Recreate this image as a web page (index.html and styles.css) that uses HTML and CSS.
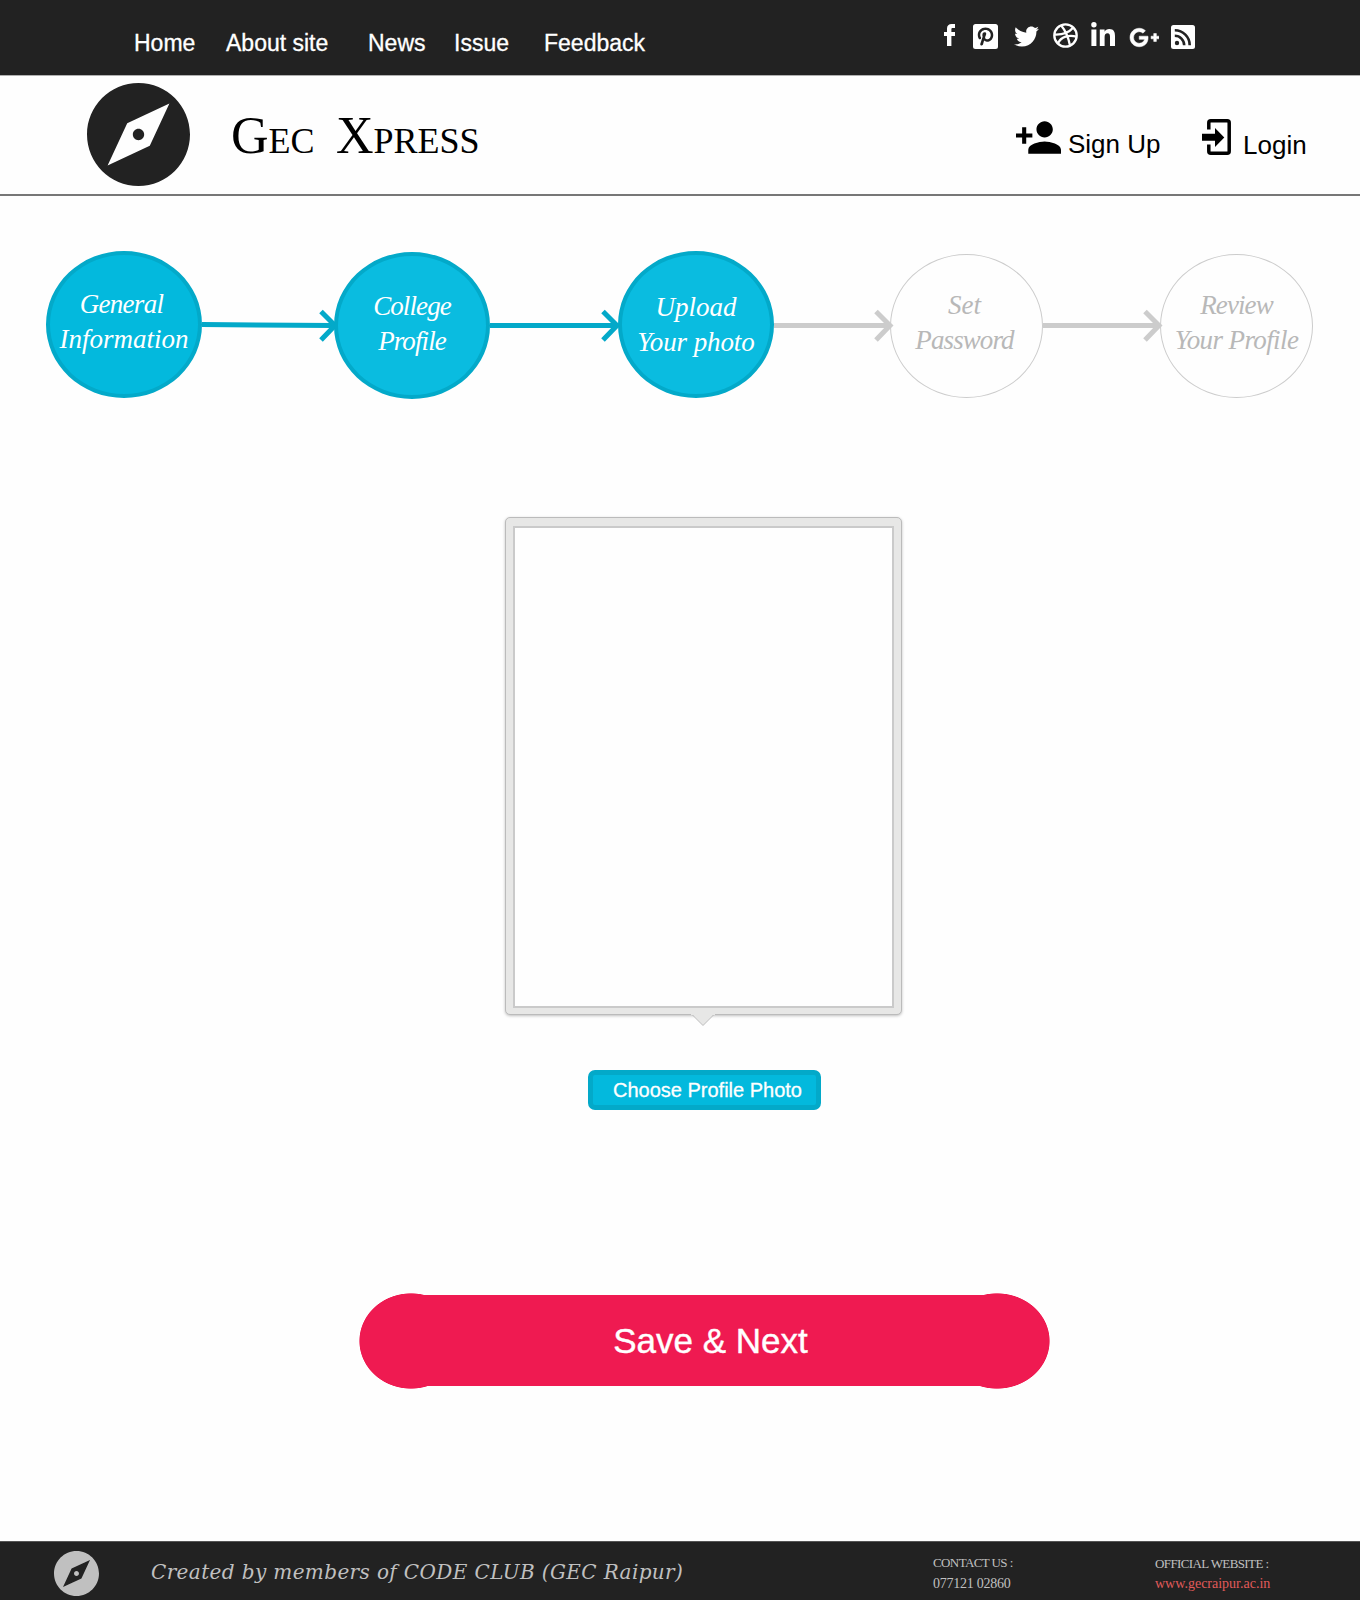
FILE: index.html
```html
<!DOCTYPE html>
<html lang="en">
<head>
<meta charset="utf-8">
<title>Gec Xpress</title>
<link rel="stylesheet" href="styles.css">
</head>
<body>
<div class="topbar">
  <nav class="nav"><a>Home</a><a>About site</a><a>News</a><a>Issue</a><a>Feedback</a></nav>
  <div class="social">
    <svg class="fb" viewBox="0 0 11 22"><path d="M11 0v4H8.7C7.8 4 7.4 4.400 7.400 5.300V8H11v4H7.400v10H3V12H0V8h3V4.600C3 1.600 4.800 0 7.600 0z"/></svg>
    <svg class="pin" viewBox="2 2 20 20"><path d="M13,16.2C12.2,16.2 11.43,15.86 10.88,15.28L9.93,18.5L9.86,18.69L9.83,18.67C9.64,19 9.29,19.2 8.9,19.2C8.29,19.2 7.8,18.71 7.8,18.1C7.8,18.05 7.81,18 7.81,17.95H7.8L7.85,17.77L9.7,12.21C9.7,12.21 9.5,11.59 9.5,10.73C9.5,9 10.42,8.5 11.16,8.5C11.91,8.5 12.58,8.76 12.58,9.81C12.58,11.15 11.69,11.84 11.69,12.81C11.69,13.55 12.29,14.16 13.03,14.16C15.37,14.16 16.2,12.4 16.2,10.75C16.2,8.57 14.32,6.8 12,6.8C9.68,6.8 7.8,8.57 7.8,10.75C7.8,11.42 8,12.09 8.34,12.68C8.43,12.84 8.5,13 8.5,13.2A1,1 0 0,1 7.5,14.2C7.13,14.2 6.79,14 6.62,13.7C6.08,12.81 5.8,11.79 5.8,10.75C5.8,7.47 8.58,4.8 12,4.8C15.42,4.8 18.2,7.47 18.2,10.75C18.2,13.37 16.57,16.2 13,16.2M20,2H4C2.89,2 2,2.89 2,4V20A2,2 0 0,0 4,22H20A2,2 0 0,0 22,20V4C22,2.89 21.1,2 20,2Z"/></svg>
    <svg class="tw" viewBox="1.5 4 21 17"><path d="M22.46,6C21.69,6.35 20.86,6.58 20,6.69C20.88,6.16 21.56,5.32 21.88,4.31C21.05,4.81 20.13,5.16 19.16,5.36C18.37,4.5 17.26,4 16,4C13.65,4 11.73,5.92 11.73,8.29C11.73,8.63 11.77,8.96 11.84,9.27C8.28,9.09 5.11,7.38 3,4.79C2.63,5.42 2.42,6.16 2.42,6.94C2.42,8.43 3.17,9.75 4.33,10.5C3.62,10.5 2.96,10.3 2.38,10C2.38,12.11 3.86,13.85 5.82,14.24C5.46,14.34 5.08,14.39 4.69,14.39C4.42,14.39 4.15,14.36 3.89,14.31C4.43,16 6,17.26 7.89,17.29C6.43,18.45 4.58,19.13 2.56,19.13C2.22,19.13 1.88,19.11 1.54,19.07C3.44,20.29 5.7,21 8.12,21C16,21 20.33,14.46 20.33,8.79C20.33,8.6 20.33,8.42 20.32,8.23C21.16,7.63 21.88,6.87 22.46,6Z"/></svg>
    <svg class="dr" viewBox="0 0 25 25"><g fill="none" stroke="#fff" stroke-width="2.3"><circle cx="12.500" cy="12.500" r="11.200"/><path d="M8 2.300Q14.500 10 17 22.500M1.500 11.500Q14 12 20.300 4.500M4.800 20.500C8 13.500 16 11.500 23.500 13.600"/></g></svg>
    <svg class="li" viewBox="0 0 24 24"><circle cx="2.900" cy="2.800" r="2.700"/><path d="M.4 7.500h5V24h-5zM8.800 7.500h4.800v2.200c.8-1.600 2.500-2.600 4.700-2.600 4.400 0 5.700 2.800 5.700 6.900v10h-5v-9c0-2.300-.5-3.800-2.500-3.800-2.100 0-2.900 1.500-2.900 3.800v9H8.800z"/></svg>
    <svg class="gp" viewBox="1 5 22 14"><path stroke="#fff" stroke-width=".4" d="M23,11H21V9H19V11H17V13H19V15H21V13H23M8,11V13.4H12C11.8,14.4 10.8,16.4 8,16.4C5.6,16.4 3.7,14.4 3.7,12C3.7,9.6 5.6,7.6 8,7.6C9.4,7.6 10.3,8.2 10.8,8.7L12.7,6.9C11.5,5.7 9.9,5 8,5C4.1,5 1,8.1 1,12C1,15.9 4.1,19 8,19C12,19 14.7,16.2 14.7,12.2C14.7,11.7 14.7,11.4 14.6,11H8Z"/></svg>
    <svg class="rss" viewBox="0 0 24 24"><rect width="24" height="24" rx="2.500"/><circle cx="6" cy="18" r="2.200" fill="#222"/><path d="M3.800 10.800A9.400 9.400 0 0 1 13.200 20.200M3.800 5.300A14.900 14.900 0 0 1 18.700 20.200" fill="none" stroke="#222" stroke-width="2.600"/></svg>
  </div>
</div>
<header class="header">
  <svg class="logo" viewBox="2 2 20 20"><path d="M12 10.900c-.61 0-1.100.49-1.100 1.100s.49 1.100 1.100 1.100 1.100-.49 1.100-1.100-.49-1.100-1.100-1.100zM12 2C6.480 2 2 6.480 2 12s4.480 10 10 10 10-4.480 10-10S17.520 2 12 2zm2.190 12.190L6 18l3.810-8.190L18 6z"/></svg>
  <h1 class="brand"><span class="w1">G<small>EC</small></span><span>X<small>PRESS</small></span></h1>
  <a class="signup"><svg viewBox="1 4 22 16"><path d="M15 12c2.210 0 4-1.790 4-4s-1.790-4-4-4-4 1.790-4 4 1.790 4 4 4zm-9-2V7H4v3H1v2h3v3h2v-3h3v-2H6zm9 4c-2.670 0-8 1.340-8 4v2h16v-2c0-2.660-5.330-4-8-4z"/></svg><span>Sign Up</span></a>
  <a class="login"><svg viewBox="0 0 29 36"><path d="M6.800 10.500V3.800q0-2 2-2h16.400q2 0 2 2v28.400q0 2-2 2H8.800q-2 0-2-2v-6.700" fill="none" stroke="#000" stroke-width="3.500"/><path d="M0 14.800h13V9l9.300 9.500L13 28v-6.200H0z"/></svg><span>Login</span></a>
</header>
<main>
  <div class="steps">
    <div class="step done first"><span class="general">General</span><span class="loose">Information</span></div>
    <svg class="link on" viewBox="0 0 132 36"><path d="M0 17.500L131 18.500" /><path d="M119 4.500l14 14-14 14.500"/></svg>
    <div class="step done second"><span>College</span><span>Profile</span></div>
    <svg class="link on l2" viewBox="0 0 128 36"><path d="M0 18.500h126"/><path d="M113 4.500l14 14-14 14.500"/></svg>
    <div class="step done third"><span class="loose">Upload</span><span class="mid">Your photo</span></div>
    <svg class="link l3" viewBox="0 0 116 36"><path d="M0 18.500h114"/><path d="M102 4.500l14 14-14 14.500"/></svg>
    <div class="step todo"><span class="set">Set</span><span class="password">Password</span></div>
    <svg class="link l4" viewBox="0 0 117 36"><path d="M0 18.500h115"/><path d="M102 4.500l14 14-14 14.500"/></svg>
    <div class="step todo"><span>Review</span><span class="review">Your Profile</span></div>
  </div>
  <div class="frame"><div class="photo"></div><svg class="tip" viewBox="0 0 24 13"><path d="M0 0h24v1h-2L12 11.500 2 1H0z" fill="#e7e7e6"/><path d="M1.500 1L12 11.500 22.500 1" fill="none" stroke="#bbb"/></svg></div>
  <button class="choose">Choose Profile Photo</button>
  <button class="save"><span>Save &amp; Next</span></button>
</main>
<footer class="footer">
  <svg class="flogo" viewBox="2 2 20 20"><path d="M12 10.900c-.61 0-1.100.49-1.100 1.100s.49 1.100 1.100 1.100 1.100-.49 1.100-1.100-.49-1.100-1.100-1.100zM12 2C6.480 2 2 6.480 2 12s4.480 10 10 10 10-4.480 10-10S17.520 2 12 2zm2.190 12.190L6 18l3.810-8.190L18 6z"/></svg>
  <p class="credit">Created by members of CODE CLUB (GEC Raipur)</p>
  <div class="contact"><span class="lab">CONTACT US :</span><span class="num">077121 02860</span></div>
  <div class="site"><span class="lab">OFFICIAL WEBSITE :</span><a>www.gecraipur.ac.in</a></div>
</footer>
</body>
</html>
```
FILE: styles.css
```css
* { box-sizing: border-box; }
body {
  margin: 0;
  width: 1360px;
  height: 1600px;
  display: flex;
  flex-direction: column;
  background: #fefefe;
  font-family: "Liberation Sans", Arial, sans-serif;
  color: #000;
}
svg { display: block; flex: none; overflow: visible; }

.topbar {
  height: 76px;
  flex: none;
  display: flex;
  background: #222;
  border-bottom: 1px solid #b0b0b0;
}
.nav {
  display: grid;
  grid-template-columns: 92px 142px 86px 90px auto;
  width: 812px;
  padding: 11px 0 0 134px;
  margin-right: 132px;
  line-height: 64px;
  font-size: 23px;
  color: #fff;
  -webkit-text-stroke: 0.3px #fff;
}
.social { display: flex; align-items: flex-start; fill: #fff; }
.fb { width: 11px; height: 22px; margin: 24px 18px 0 0; }
.pin { width: 25px; height: 25px; margin: 24px 16px 0 0; }
.tw { width: 25px; height: 21px; margin: 26px 14px 0 0; }
.dr { width: 25px; height: 25px; margin: 23px 13px 0 0; }
.li { width: 24px; height: 24px; margin: 22px 15px 0 0; }
.gp { width: 29px; height: 19px; margin: 28px 12px 0 0; }
.rss { width: 24px; height: 24px; margin-top: 25px; }

.header {
  height: 120px;
  flex: none;
  display: flex;
  align-items: flex-start;
  padding: 7px 0 0 87px;
  border-bottom: 2px solid #777;
}
.logo { width: 103px; height: 103px; fill: #222; }
.brand {
  display: flex;
  width: 786px;
  margin: 0;
  padding: 24px 0 0 41px;
  font: 400 52px/58px "Liberation Serif", serif;
}
.brand small { font-size: 36px; }
.w1 { width: 105px; }
.signup, .login { display: flex; font-size: 26px; line-height: 30px; }
.signup { width: 226px; padding-left: 40px; }
.signup svg { width: 45px; height: 33px; margin: 38px 7px 0 0; fill: #000; }
.signup span { padding-top: 46px; white-space: nowrap; }
.login svg { width: 29px; height: 36px; margin: 36px 12px 0 0; }
.login span { padding-top: 47px; }

main { flex: 1; display: flex; flex-direction: column; align-items: flex-start; }
.steps { display: flex; align-items: flex-start; padding: 55px 0 0 46px; height: 321px; }
.step {
  flex: none;
  display: flex;
  flex-direction: column;
  align-items: center;
  width: 156px;
  height: 147px;
  padding-top: 32px;
  border: 4px solid #03a9c9;
  border-radius: 50%;
  background: #0abce0;
  color: #fff;
  font: italic 27px/35px "Liberation Serif", serif;
  letter-spacing: -0.9px;
  white-space: nowrap;
}
.loose { letter-spacing: 0; }
.mid { letter-spacing: -0.1px; }
.general { padding-right: 5px; letter-spacing: -0.7px; }
.set { padding-right: 4px; letter-spacing: 0; }
.password { padding-right: 4px; }
.review { letter-spacing: -0.6px; }
.first { background: #03b9dd; }
.second { margin-top: 1px; padding-top: 33px; }
.third { padding-top: 35px; }
.todo {
  width: 153px;
  height: 144px;
  margin-top: 3px;
  padding-top: 33px;
  border: 1px solid #ccc;
  background: none;
  color: #b8b8b8;
}
.link { width: 132px; height: 36px; margin-top: 56px; fill: none; stroke: #ccc; stroke-width: 5; }
.on { stroke: #03a9c9; }
.l2 { width: 128px; }
.l3 { width: 116px; }
.l4 { width: 117px; }

.frame {
  position: relative;
  width: 397px;
  height: 498px;
  margin-left: 505px;
  padding: 8px 7px 6px;
  border: 1px solid #bbb;
  border-radius: 5px;
  background: #e7e7e6;
  box-shadow: 0 1px 3px rgba(0, 0, 0, .25);
}
.photo { height: 100%; border: 2px solid #cacaca; background: #fefefe; }
.tip { position: absolute; left: 185px; bottom: -13px; width: 24px; height: 13px; }

.choose {
  width: 233px;
  height: 40px;
  margin: 55px 0 0 588px;
  padding: 0 0 0 6px;
  border: 5px solid #03a9c9;
  border-radius: 7px;
  background: #03b9dd;
  color: #fff;
  font: 20px/30px "Liberation Sans", Arial, sans-serif;
  white-space: nowrap;
  -webkit-text-stroke: 0.3px #fff;
}
.save {
  display: flex;
  justify-content: center;
  align-items: center;
  width: 691px;
  height: 96px;
  margin: 183px 0 0 359px;
  padding: 0 0 1px 12px;
  border: 0;
  background:
    radial-gradient(52px 48px at 52px 48px, #ef1a51 98.5%, transparent 100%),
    radial-gradient(53px 48px at 638px 48px, #ef1a51 98.5%, transparent 100%),
    linear-gradient(#ef1a51, #ef1a51) 52px 2px / 586px 91px no-repeat;
  color: #fff;
  font: 35px/40px "Liberation Sans", Arial, sans-serif;
  -webkit-text-stroke: 0.4px #fff;
}

.footer {
  height: 59px;
  flex: none;
  display: flex;
  align-items: flex-start;
  padding-left: 54px;
  border-top: 1px solid #555;
  background: #222;
  color: #c0c0c0;
  font-family: "Liberation Serif", serif;
  white-space: nowrap;
}
.flogo { width: 45px; height: 45px; margin-top: 9px; fill: #c0c0c0; }
.credit {
  width: 782px;
  margin: 0;
  padding: 15px 0 0 52px;
  font: italic 20px/30px "DejaVu Serif", serif;
  letter-spacing: 0.38px;
}
.contact, .site { display: flex; flex-direction: column; padding-top: 11px; font-size: 14px; line-height: 20px; }
.contact { width: 222px; margin-left: 52px; }
.num { padding-top: 1px; letter-spacing: -0.25px; }
.site { padding-top: 12px; }
.lab { font-size: 13px; letter-spacing: -0.6px; }
.site a { color: #e05a5a; }
```
